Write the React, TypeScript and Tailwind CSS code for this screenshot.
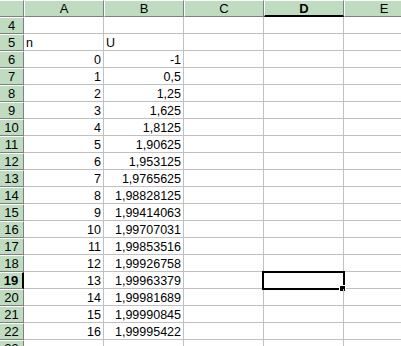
import React from "react";

const data: [number, string, string][] = [
  [4, "", ""],
  [5, "n", "U"],
  [6, "0", "-1"],
  [7, "1", "0,5"],
  [8, "2", "1,25"],
  [9, "3", "1,625"],
  [10, "4", "1,8125"],
  [11, "5", "1,90625"],
  [12, "6", "1,953125"],
  [13, "7", "1,9765625"],
  [14, "8", "1,98828125"],
  [15, "9", "1,99414063"],
  [16, "10", "1,99707031"],
  [17, "11", "1,99853516"],
  [18, "12", "1,99926758"],
  [19, "13", "1,99963379"],
  [20, "14", "1,99981689"],
  [21, "15", "1,99990845"],
  [22, "16", "1,99995422"],
  [23, "", ""],
];

const cols = ["A", "B", "C", "D", "E"];

export default function App() {
  return (
    <div
      className="w-[401px] h-[346px] overflow-hidden bg-white text-black"
      style={{ fontFamily: '"Liberation Sans", Arial, sans-serif' }}
    >
      <div className="flex h-[17px]">
        <div className="w-[24px] shrink-0 bg-[#c0dcc0] border-r border-b border-[#808080] border-t border-t-white" />
        {cols.map((c) => {
          const sel = c === "D";
          return (
            <div
              key={c}
              className={
                "w-[80px] shrink-0 bg-[#c0dcc0] border-l border-l-white border-r border-r-[#808080] border-t border-t-white flex items-center justify-center text-[13px] leading-none " +
                (sel ? "border-b-2 border-b-black font-bold" : "border-b border-b-[#808080]")
              }
            >
              {c}
            </div>
          );
        })}
      </div>
      {data.map(([n, a, b]) => {
        const sel = n === 19;
        const isText = n === 5;
        return (
          <div key={n} className="flex h-[17px]">
            <div
              className={
                "w-[24px] shrink-0 bg-[#c0dcc0] border-t border-t-white border-b border-b-[#808080] flex items-center justify-center text-[13px] leading-none " +
                (sel ? "border-r-2 border-r-black font-bold" : "border-r border-r-[#808080]")
              }
            >
              {n}
            </div>
            <div
              className={
                "w-[80px] shrink-0 border-r border-b border-[#c0c0c0] flex items-end pb-[1px] text-[12.5px] leading-none " +
                (isText ? "justify-start pl-[2px]" : "justify-end pr-[2px]")
              }
            >
              {a}
            </div>
            <div
              className={
                "w-[80px] shrink-0 border-r border-b border-[#c0c0c0] flex items-end pb-[1px] text-[12.5px] leading-none " +
                (isText ? "justify-start pl-[2px]" : "justify-end pr-[2px]")
              }
            >
              {b}
            </div>
            <div className="w-[80px] shrink-0 border-r border-b border-[#c0c0c0]" />
            <div className="w-[80px] shrink-0 border-r border-b border-[#c0c0c0] relative">
              {sel && (
                <>
                  <div className="absolute left-[-2px] top-[-1px] w-[83px] h-[19px] border-2 border-black" />
                  <div className="absolute left-[75px] top-[13px] w-[7px] h-[7px] bg-black border border-white" />
                </>
              )}
            </div>
            <div className="w-[80px] shrink-0 border-r border-b border-[#c0c0c0]" />
          </div>
        );
      })}
    </div>
  );
}
